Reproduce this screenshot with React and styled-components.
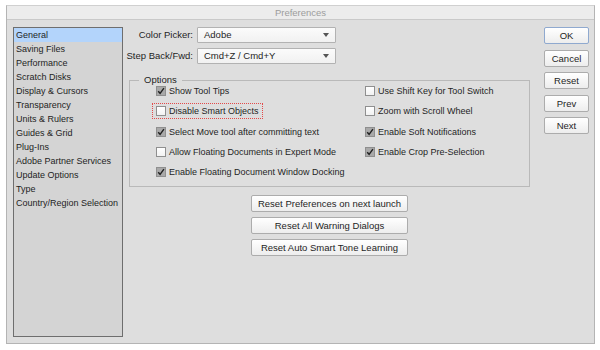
import styled, { createGlobalStyle } from "styled-components";

const Global = createGlobalStyle`
  html, body { margin: 0; background: #fff; }
  body {
    font-family: "Liberation Sans", Arial, sans-serif;
    font-size: 9px;
    color: #1e1e1e;
  }
`;

const Page = styled.div`
  padding: 5px 7px 0 6px;
`;

const Window = styled.div`
  width: 587px;
  height: 337px;
  border: 1px solid #b4b4b4;
  border-top-color: #d0d0d0;
  background: #dedede;
  display: flex;
  flex-direction: column;
`;

const TitleBar = styled.div`
  height: 13px;
  line-height: 13px;
  text-align: center;
  color: #9c9c9c;
  font-size: 9.5px;
  background: #ececec;
  border-bottom: 1px solid #c9c9c9;
`;

const Body = styled.div`
  flex: 1;
  display: flex;
  padding: 7px 5px 5px 6px;
`;

const Sidebar = styled.ul`
  list-style: none;
  margin: 0;
  padding: 0;
  width: 108px;
  height: 308px;
  border: 1px solid #6e6e6e;
  background: #d4d4d4;
`;

const NavItem = styled.li`
  height: 14px;
  line-height: 14px;
  padding-left: 2px;
  background: ${(p) => (p.$active ? "#b3d4fb" : "transparent")};
`;

const Main = styled.div`
  width: 401px;
  margin-left: 6px;
  display: flex;
  flex-direction: column;
`;

const FieldRows = styled.div`
  display: grid;
  grid-template-columns: 64px 139px;
  column-gap: 4px;
  row-gap: 5px;
`;

const Label = styled.label`
  display: flex;
  justify-content: flex-end;
  white-space: nowrap;
  line-height: 16px;
  font-size: 9.5px;
`;

const Select = styled.div`
  height: 14px;
  line-height: 14px;
  border: 1px solid #b2b2b2;
  border-radius: 1px;
  background: linear-gradient(#fbfbfb, #f1f1f1);
  padding: 0 6px;
  display: flex;
  justify-content: space-between;
  align-items: center;
  font-size: 9.5px;
`;

const Arrow = styled.span`
  width: 0;
  height: 0;
  border-left: 3.5px solid transparent;
  border-right: 3.5px solid transparent;
  border-top: 4px solid #555;
`;

const Group = styled.fieldset`
  margin: 11px 0 0 0;
  padding: 0 0 5px 25px;
  border: 1px solid #b9b9b9;
  height: 105px;
`;

const Legend = styled.legend`
  margin-left: -16px;
  padding: 0 5px;
  line-height: 10px;
  font-size: 9.5px;
`;

const OptionGrid = styled.div`
  display: grid;
  grid-template-columns: 209px 1fr;
  grid-auto-rows: 20.3px;
  margin-top: -4px;
`;

const Option = styled.div`
  display: flex;
  align-items: center;
  grid-column: ${(p) => p.$col};
  grid-row: ${(p) => p.$row};
`;

const OptionInner = styled.span`
  display: flex;
  align-items: center;
  gap: 3px;
  padding: 2px 3px;
  margin-left: -3px;
  border: 1px dotted ${(p) => (p.$focus ? "#e24a4a" : "transparent")};
`;

const Box = styled.span`
  width: 8px;
  height: 8px;
  border: 1px solid #8f8f8f;
  background: ${(p) => (p.$checked ? "#a9a9a9" : "linear-gradient(#ffffff, #f2f2f2)")};
  display: flex;
  align-items: center;
  justify-content: center;
`;

const ActionStack = styled.div`
  display: flex;
  flex-direction: column;
  align-items: center;
  gap: 5px;
  margin-top: 8px;
`;

const Button = styled.button`
  font-family: inherit;
  font-size: 9.5px;
  color: #1e1e1e;
  width: ${(p) => p.$w}px;
  height: 17px;
  padding: 0;
  border: 1px solid ${(p) => (p.$default ? "#8fa9cf" : "#acacac")};
  border-radius: 2px;
  background: linear-gradient(#ffffff, #ededed);
`;

const SideButtons = styled.div`
  margin-left: auto;
  display: flex;
  flex-direction: column;
  gap: 5.5px;
`;

const Check = () => (
  <svg width="8" height="8" viewBox="0 0 8 8">
    <path d="M1.2 4.2 L3.1 6.3 L6.9 1.2" fill="none" stroke="#222" strokeWidth="1.4" />
  </svg>
);

const nav = [
  "General", "Saving Files", "Performance", "Scratch Disks", "Display & Cursors",
  "Transparency", "Units & Rulers", "Guides & Grid", "Plug-Ins",
  "Adobe Partner Services", "Update Options", "Type", "Country/Region Selection",
];

const options = [
  { label: "Show Tool Tips", checked: true, col: 1, row: 1 },
  { label: "Disable Smart Objects", checked: false, col: 1, row: 2, focus: true },
  { label: "Select Move tool after committing text", checked: true, col: 1, row: 3 },
  { label: "Allow Floating Documents in Expert Mode", checked: false, col: 1, row: 4 },
  { label: "Enable Floating Document Window Docking", checked: true, col: 1, row: 5 },
  { label: "Use Shift Key for Tool Switch", checked: false, col: 2, row: 1 },
  { label: "Zoom with Scroll Wheel", checked: false, col: 2, row: 2 },
  { label: "Enable Soft Notifications", checked: true, col: 2, row: 3 },
  { label: "Enable Crop Pre-Selection", checked: true, col: 2, row: 4 },
];

export default function App() {
  return (
    <Page>
      <Global />
      <Window>
        <TitleBar>Preferences</TitleBar>
        <Body>
          <Sidebar>
            {nav.map((n, i) => (
              <NavItem key={n} $active={i === 0}>{n}</NavItem>
            ))}
          </Sidebar>
          <Main>
            <FieldRows>
              <Label>Color Picker:</Label>
              <Select>Adobe<Arrow /></Select>
              <Label>Step Back/Fwd:</Label>
              <Select>Cmd+Z / Cmd+Y<Arrow /></Select>
            </FieldRows>
            <Group>
              <Legend>Options</Legend>
              <OptionGrid>
                {options.map((o) => (
                  <Option key={o.label} $col={o.col} $row={o.row}>
                    <OptionInner $focus={o.focus}>
                      <Box $checked={o.checked}>{o.checked && <Check />}</Box>
                      {o.label}
                    </OptionInner>
                  </Option>
                ))}
              </OptionGrid>
            </Group>
            <ActionStack>
              <Button $w={157}>Reset Preferences on next launch</Button>
              <Button $w={157}>Reset All Warning Dialogs</Button>
              <Button $w={157}>Reset Auto Smart Tone Learning</Button>
            </ActionStack>
          </Main>
          <SideButtons>
            <Button $w={45} $default>OK</Button>
            <Button $w={45}>Cancel</Button>
            <Button $w={45}>Reset</Button>
            <Button $w={45}>Prev</Button>
            <Button $w={45}>Next</Button>
          </SideButtons>
        </Body>
      </Window>
    </Page>
  );
}
